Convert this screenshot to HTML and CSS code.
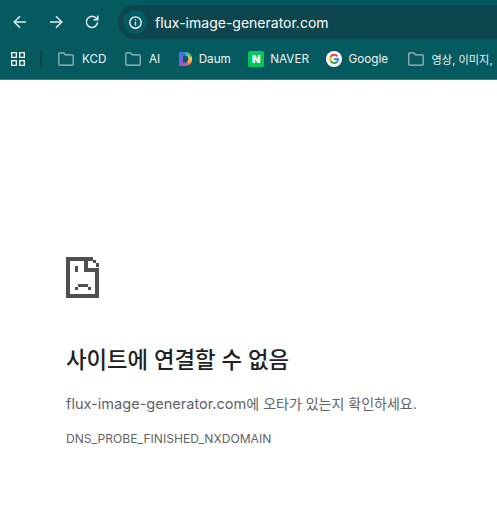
FILE: index.html
```html
<!DOCTYPE html>
<html lang="ko">
<head>
    <meta charset="UTF-8">
    <title>flux-image-generator.com</title>
    <link rel="stylesheet" href="styles.css">
</head>
<body>
    <header class="browser">
        <div class="toolbar">
            <div class="nav-buttons">
                <svg class="nav-icon" viewBox="0 0 16 16"><path d="M14 8H2.500M8 2.200 2.200 8 8 13.800"/></svg>
                <svg class="nav-icon" viewBox="0 0 16 16"><path d="M2 8h11.500M8 2.200 13.800 8 8 13.800"/></svg>
                <svg class="nav-icon" viewBox="0 0 16 16"><path d="M13.600 8.200A5.600 5.600 0 1 1 11.800 3.800L13.600 5.600M13.800 1.400v4.400H9.400"/></svg>
            </div>
            <div class="omnibox">
                <div class="site-info">
                    <svg viewBox="0 0 16 16"><circle cx="8" cy="8" r="6.100"/><path d="M8 7.200v4M8 4.400v1.400"/></svg>
                </div>
                <span class="url">flux-image-generator.com</span>
            </div>
        </div>
        <div class="bookmarks">
            <svg class="apps-icon" viewBox="0 0 14 14"><path d="M.7.7h4.600v4.600H.7zM8.700.7h4.600v4.600H8.700zM.7 8.700h4.600v4.600H.7zM8.700 8.700h4.600v4.600H8.700z"/></svg>
            <span class="divider"></span>
            <div class="bookmark">
                <svg class="folder" viewBox="0 0 16 14"><path d="M.8 12.200V1.800q0-1 1-1h4l1.600 2h6.800q1 0 1 1v8.400q0 1-1 1H1.800q-1 0-1-1z"/></svg>
                <span>KCD</span>
            </div>
            <div class="bookmark">
                <svg class="folder" viewBox="0 0 16 14"><path d="M.8 12.200V1.800q0-1 1-1h4l1.600 2h6.800q1 0 1 1v8.400q0 1-1 1H1.800q-1 0-1-1z"/></svg>
                <span>AI</span>
            </div>
            <div class="bookmark bookmark-site">
                <svg class="favicon" viewBox="0 0 14 14" fill="none">
                    <defs>
                        <linearGradient id="daumBase" x1="0" y1="0" x2="0.7" y2="1">
                            <stop offset="0" stop-color="#2f7df0"/>
                            <stop offset="0.6" stop-color="#8a5ad8"/>
                            <stop offset="1" stop-color="#f0566a"/>
                        </linearGradient>
                        <linearGradient id="daumArc" x1="0" y1="0" x2="0" y2="1">
                            <stop offset="0" stop-color="#2fb8a0"/>
                            <stop offset="0.5" stop-color="#f6d03c"/>
                            <stop offset="1" stop-color="#f58a50"/>
                        </linearGradient>
                    </defs>
                    <path d="M0 0h6.500a6.500 7 0 0 1 0 14H0zM4 3.600v6.800h2.500a3 3.400 0 0 0 0-6.800z" fill="url(#daumBase)" fill-rule="evenodd"/>
                    <path d="M6.500 1.800a4.750 5.200 0 0 1 2.500 9.600" stroke="url(#daumArc)" stroke-width="3.600"/>
                </svg>
                <span>Daum</span>
            </div>
            <div class="bookmark bookmark-site">
                <span class="naver-logo">N</span>
                <span>NAVER</span>
            </div>
            <div class="bookmark bookmark-site">
                <span class="google-logo">
                    <svg viewBox="0 0 16 16" fill="none" stroke-width="2.800">
                        <path d="M12.300 4.300A5.400 5.400 0 0 0 3.400 5.300" stroke="#ea4335"/>
                        <path d="M3.400 5.300a5.400 5.400 0 0 0 0 5.400" stroke="#fbbc05"/>
                        <path d="M3.400 10.700a5.400 5.400 0 0 0 8.700 1" stroke="#34a853"/>
                        <path d="M12.100 11.700A5.400 5.400 0 0 0 13.400 8H8" stroke="#4285f4"/>
                    </svg>
                </span>
                <span>Google</span>
            </div>
            <div class="bookmark bookmark-folder-last">
                <svg class="folder" viewBox="0 0 16 14"><path d="M.8 12.200V1.800q0-1 1-1h4l1.600 2h6.800q1 0 1 1v8.400q0 1-1 1H1.800q-1 0-1-1z"/></svg>
                <span>영상, 이미지,</span>
            </div>
        </div>
    </header>

    <main class="error-page">
        <svg class="sad-tab" viewBox="0 0 33 41" shape-rendering="crispEdges">
            <path d="M0 0h27v4H4v33h25V11h4v30H0z"/>
            <path d="M18 0h4v11h11v4H18z"/>
            <path d="M27 3h3v3h-3zM30 6h3v4h-3z"/>
            <path d="M9 9h3v6H9zM12 27h10v3H12zM9 30h3v3H9zM22 30h3v3h-3z"/>
        </svg>
        <h1 class="error-title">사이트에 연결할 수 없음</h1>
        <p class="error-text"><span class="domain">flux-image-generator.com</span>에 오타가 있는지 확인하세요.</p>
        <p class="error-code">DNS_PROBE_FINISHED_NXDOMAIN</p>
    </main>
</body>
</html>
```

FILE: styles.css
```css
* {
    margin: 0;
    padding: 0;
    box-sizing: border-box;
}

body {
    font-family: 'Inter', 'Noto Sans CJK KR', sans-serif;
    background: #ffffff;
    overflow: hidden;
}

.browser {
    background: #055a5f;
    border-bottom: 1px solid #3f8085;
    color: #ffffff;
}

.toolbar {
    display: flex;
    align-items: center;
    height: 39px;
    padding-top: 5px;
}

.nav-buttons {
    display: flex;
    flex-shrink: 0;
    gap: 20px;
    width: 118px;
    padding-left: 12px;
}

.nav-icon {
    width: 16px;
    height: 16px;
    fill: none;
    stroke: #e3eeee;
    stroke-width: 1.500;
}

.omnibox {
    flex: 1;
    display: flex;
    align-items: center;
    gap: 8px;
    height: 34px;
    padding-left: 5px;
    background: #0d464c;
    border-radius: 17px 0 0 17px;
}

.site-info {
    display: flex;
    align-items: center;
    justify-content: center;
    width: 24px;
    height: 24px;
    background: #055a5f;
    border-radius: 50%;
}

.site-info svg {
    width: 15px;
    height: 15px;
    fill: none;
    stroke: #ffffff;
    stroke-width: 1.400;
}

.url {
    font-size: 14px;
}

.bookmarks {
    display: flex;
    align-items: center;
    height: 40px;
    padding-left: 11px;
    white-space: nowrap;
}

.apps-icon {
    flex-shrink: 0;
    width: 14px;
    height: 14px;
    fill: none;
    stroke: #ffffff;
    stroke-width: 1.300;
}

.divider {
    flex-shrink: 0;
    width: 2px;
    height: 16px;
    margin: 0 16px 0 15px;
    background: #0b3f45;
}

.bookmark {
    display: flex;
    flex-shrink: 0;
    align-items: center;
    gap: 8px;
    margin-right: 18.500px;
    font-size: 11.700px;
    color: #eef5f5;
}

.bookmark-site {
    gap: 6px;
    margin-right: 17.500px;
}

.bookmark-folder-last {
    margin: 0 0 0 2px;
    font-size: 11.200px;
}

.folder {
    flex-shrink: 0;
    width: 16px;
    height: 14px;
    fill: none;
    stroke: #a9bcbd;
    stroke-width: 1.200;
}

.favicon {
    flex-shrink: 0;
    width: 14px;
    height: 14px;
}

.naver-logo {
    width: 16px;
    height: 16px;
    border-radius: 2px;
    background: #03c75a;
    font-size: 11px;
    font-weight: 900;
    line-height: 16px;
    text-align: center;
    color: #ffffff;
}

.google-logo {
    display: flex;
    align-items: center;
    justify-content: center;
    width: 16px;
    height: 16px;
    background: #ffffff;
    border-radius: 50%;
}

.google-logo svg {
    width: 12px;
    height: 12px;
}

.error-page {
    padding: 177px 0 0 66px;
}

.sad-tab {
    display: block;
    width: 33px;
    height: 41px;
    fill: #505050;
}

.error-title {
    margin-top: 49px;
    font-size: 22.300px;
    font-weight: 500;
    line-height: 26px;
    color: #202124;
}

.error-text {
    margin-top: 21px;
    font-size: 14px;
    line-height: 20px;
    color: #5f6368;
}

.domain {
    font-size: 14.550px;
}

.error-code {
    margin-top: 17px;
    font-size: 12.100px;
    line-height: 16px;
    color: #5f6368;
}
```
